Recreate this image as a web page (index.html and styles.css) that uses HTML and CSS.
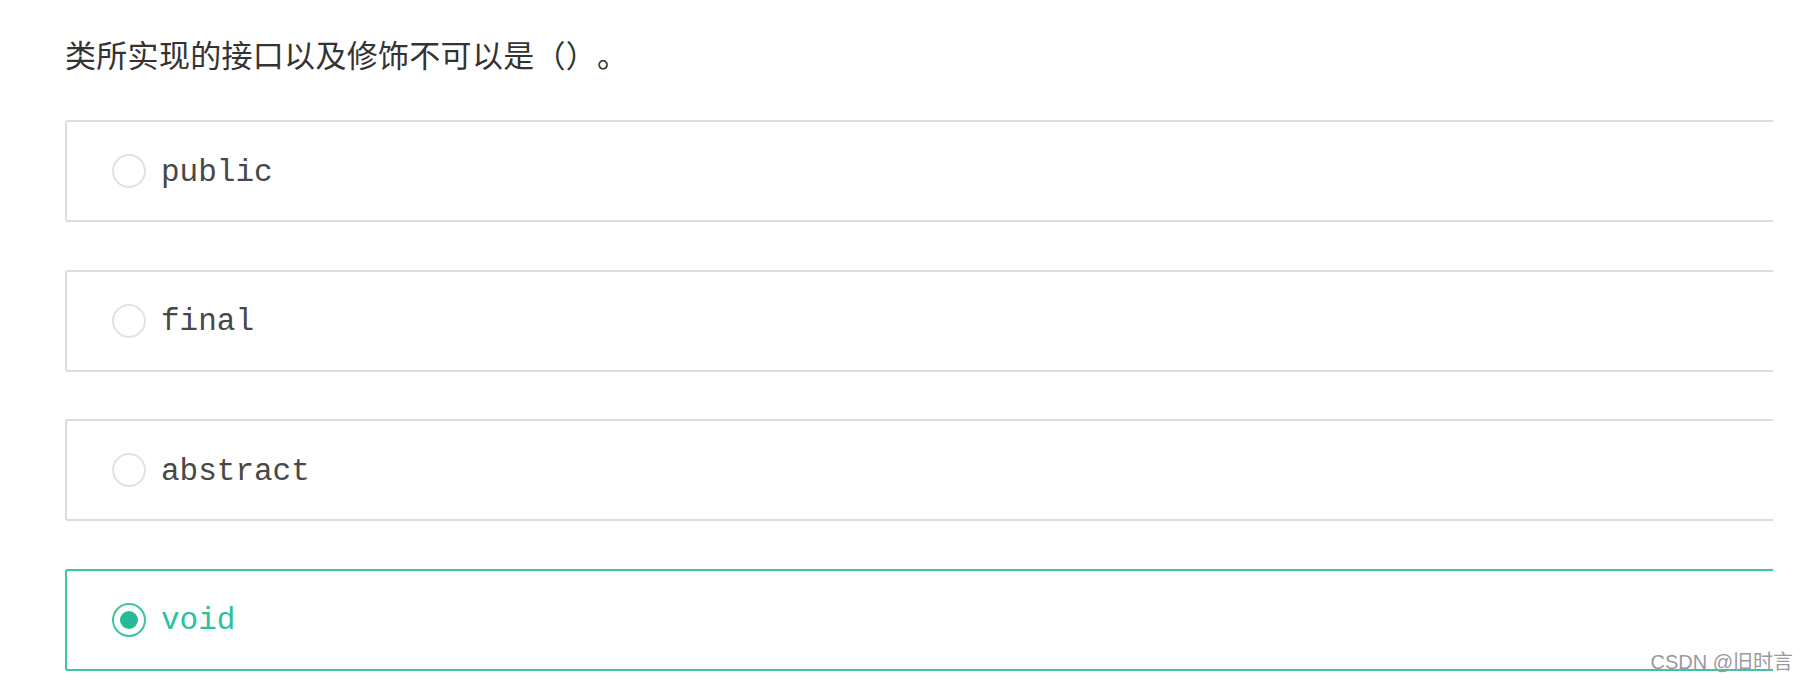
FILE: index.html
```html
<!DOCTYPE html>
<html lang="zh">
<head>
<meta charset="utf-8">
<title>题目</title>
<link rel="stylesheet" href="styles.css">
</head>
<body>
<div class="page">
  <div class="question">类所实现的接口以及修饰不可以是（）。</div>
  <div class="options">
    <div class="option"><span class="radio"></span><span class="label">public</span></div>
    <div class="option"><span class="radio"></span><span class="label">final</span></div>
    <div class="option"><span class="radio"></span><span class="label">abstract</span></div>
    <div class="option selected"><span class="radio"></span><span class="label">void</span></div>
  </div>
</div>
<div class="watermark">CSDN @旧时言</div>
</body>
</html>
```

FILE: styles.css
```css
html, body {
  margin: 0;
  padding: 0;
  background: #ffffff;
}

.page {
  padding: 38px 35px 0 65px;
  width: 1708px;
}

.question {
  font-family: "Microsoft YaHei", "Noto Sans CJK SC", sans-serif;
  font-size: 31px;
  line-height: 31px;
  color: #333333;
  margin-bottom: 51px;
  text-spacing-trim: space-all;
  letter-spacing: 0.3px;
}

.options {
  display: flex;
  flex-direction: column;
  gap: 47.5px;
  overflow: hidden;
  width: 1708px;
}

.option {
  box-sizing: border-box;
  width: 1740px;
  height: 102px;
  border: 2px solid #dcdcdc;
  border-radius: 3px;
  display: flex;
  align-items: center;
  padding-left: 45px;
}

.radio {
  box-sizing: border-box;
  width: 34px;
  height: 34px;
  border: 2px solid #e2e2e2;
  border-radius: 50%;
  margin-right: 15px;
  flex: none;
  display: flex;
  align-items: center;
  justify-content: center;
}

.label {
  font-family: "Courier New", "Liberation Mono", monospace;
  font-size: 31px;
  color: #484848;
  line-height: 1;
  padding-top: 2px;
}

.option.selected {
  border-color: #3cc4a3;
}

.option.selected .radio {
  border-color: #3cc4a3;
}

.option.selected .radio::after {
  content: "";
  width: 18px;
  height: 18px;
  border-radius: 50%;
  background: #25bb96;
}

.option.selected .label {
  color: #2fbf9c;
}

.watermark {
  position: absolute;
  right: 15px;
  top: 650px;
  font-family: "Liberation Sans", "Noto Sans CJK SC", sans-serif;
  font-size: 20px;
  line-height: 24px;
  color: #9a9a9a;
}
```
